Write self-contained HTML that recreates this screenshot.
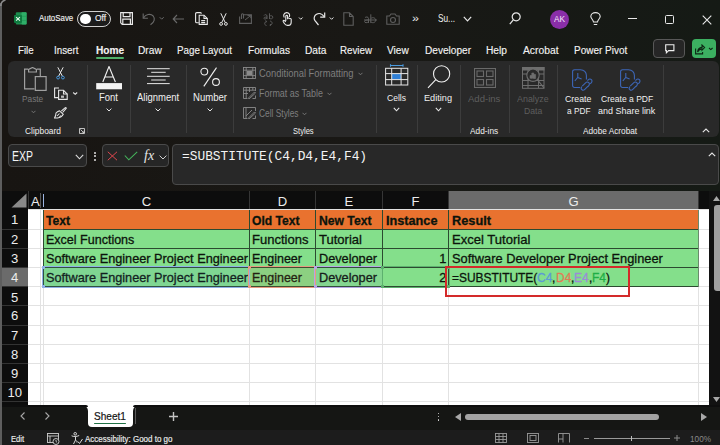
<!DOCTYPE html>
<html><head><meta charset="utf-8"><style>
html,body{margin:0;padding:0;}
body{width:720px;height:445px;overflow:hidden;position:relative;background:#1b1a17;font-family:"Liberation Sans", sans-serif;}
body>div,body>span,body>svg{position:absolute;}
.t{white-space:nowrap;display:block;}
.bg{left:0;top:0;width:720px;height:191px;background:linear-gradient(90deg,#181512 0%,#191815 50%,#151a15 100%);}
</style></head><body>
<div class="bg"></div>
<div style="left:0px;top:3px;width:1.6px;height:442px;background:#5e5e5e;"></div>
<svg style="left:0;top:0" width="8" height="6" viewBox="0 0 8 6"><path d="M0.8 6 C0.8 3 2.5 0.8 5.5 0" stroke="#8a8a8a" stroke-width="1.6" fill="none"/></svg>
<svg style="left:14px;top:12px" width="14" height="14" viewBox="0 0 14 14">
<rect x="1.8" y="0.2" width="10.8" height="12.4" rx="1" fill="#1d8c4e"/>
<rect x="7.5" y="0.2" width="5.1" height="12.4" rx="0.8" fill="#2fae68"/>
<path d="M7.5 4.3 H12.6 M7.5 8.4 H12.6" stroke="#1d8c4e" stroke-width="0.5"/>
<rect x="0" y="2.9" width="8" height="8" rx="0.8" fill="#0f7b40"/>
<path d="M2.1 5.2 L5.9 8.6 M5.9 5.2 L2.1 8.6" stroke="#e8fff0" stroke-width="1.1"/>
</svg>
<span class="t" style="left:38.50px;top:14.22px;font-size:9.01px;line-height:9.01px;font-family:'Liberation Sans', sans-serif;font-weight:400;color:#f0f0f0;transform:scaleX(0.8777);transform-origin:left top;-webkit-text-stroke:0.15px #f0f0f0;">AutoSave</span>
<div style="left:77.1px;top:11px;width:33.8px;height:15.6px;border:1.4px solid #d0d0d0;border-radius:8px;box-sizing:border-box;background:#1c1c1c;"></div>
<div style="left:80.1px;top:13.8px;width:10.6px;height:10.6px;background:#fff;border-radius:50%;"></div>
<span class="t" style="left:94.60px;top:14.22px;font-size:9.01px;line-height:9.01px;font-family:'Liberation Sans', sans-serif;font-weight:400;color:#f0f0f0;transform:scaleX(0.9364);transform-origin:left top;-webkit-text-stroke:0.15px #f0f0f0;">Off</span>
<svg style="left:120px;top:12px" width="14" height="13" viewBox="0 0 14 13" fill="none" stroke="#e8e8e8" stroke-width="1.2">
<path d="M0.7 0.7 H12.4 V12.3 H2.2 L0.7 10.8 Z"/><path d="M3.2 0.7 V4.6 H10 V0.7"/><path d="M2.8 12.3 V7.2 H10.4 V12.3"/>
</svg>
<svg style="left:142px;top:12px" width="24" height="14" viewBox="0 0 24 14" fill="none" stroke="#6a6a6a" stroke-width="1.1">
<path d="M1.2 1.5 V6.2 H5.9"/><path d="M1.5 6 C3.5 2.2 8.5 1.3 11.2 4 C13.2 6.5 12.6 10 8.5 12.8"/>
<path d="M17.7 5.2 L19.7 7.2 L21.7 5.2" stroke-width="1"/>
</svg>
<svg style="left:172px;top:13.5px" width="12" height="10" viewBox="0 0 12 10" fill="none" stroke="#6a6a6a" stroke-width="1.1">
<path d="M12 5 H1.2 M5 1 L1.2 5 L5 9"/></svg>
<svg style="left:194.5px;top:12px" width="13" height="13" viewBox="0 0 13 13" fill="none" stroke="#e8e8e8" stroke-width="1.1">
<path d="M6.5 1.6 C6.2 0.8 5.8 0.6 5 0.6 H1.8 C1 0.6 0.6 1 0.6 1.8 V9.8 C0.6 10.4 1 10.8 1.8 10.8 H3.8"/><path d="M4.2 3.2 H9 L12.3 6.5 V12.4 H4.2 Z" fill="#191815"/><path d="M9 3.2 V6.5 H12.3"/><path d="M6.2 8.6 H10.2 M6.2 10.6 H10.2"/>
</svg>
<svg style="left:218.5px;top:12.5px" width="9" height="13" viewBox="0 0 9 13" fill="none" stroke="#e8e8e8" stroke-width="1">
<path d="M1.8 0.3 L6.2 9.5 M7.2 0.3 L2.8 9.5"/><circle cx="2.1" cy="10.9" r="1.4"/><circle cx="6.9" cy="10.9" r="1.4"/></svg>
<svg style="left:239px;top:12.5px" width="13" height="11" viewBox="0 0 13 11" fill="none" stroke="#5e5e5e" stroke-width="1.1">
<path d="M4 1.8 H12.4 V10.4 H0.6 V3.5"/><path d="M2.5 6 V1.8 C2.5 0.4 4.5 0.4 4.5 1.8 V5.5"/><path d="M6 7 L11.8 2.4 M8.5 2.4 H11.8 V5.2" stroke-width="1"/></svg>
<svg style="left:263px;top:12.5px" width="11" height="13" viewBox="0 0 11 13" fill="none" stroke="#5a5a5a" stroke-width="1">
<path d="M1 2.5 C1.5 1.3 4 1.3 4 3 V6 M4 4.2 C2 4 0.8 4.5 0.8 5.2 C0.8 6.2 3 6.3 4 5"/><path d="M6.5 0.3 V6 M6.5 3.3 C7.5 2.3 9.8 2.5 9.8 4.2 C9.8 6 7.5 6.2 6.5 5.2"/>
<path d="M3.5 12.5 C1 12 1 9 3.5 8.5 M2.5 7.5 L3.8 8.5 L2.5 9.7 M7 8 C9.8 8.5 9.8 11.8 7 12.2 M8 11 L6.8 12.2 L8 13.3"/></svg>
<svg style="left:282px;top:12px" width="23" height="14" viewBox="0 0 23 14" fill="none" stroke="#e8e8e8" stroke-width="1.1">
<path d="M2.3 5.5 C1.2 3.8 1.6 0.8 4.5 0.6 C7.5 0.5 8 3.2 7.3 5"/><path d="M3.8 9 V4.2 C3.8 3 5.6 3 5.6 4.2 V7.2 M5.6 6.5 C5.8 5.7 7.4 5.8 7.4 6.7 M7.4 7 C7.6 6.2 9.2 6.3 9.2 7.3 V10.3 C9.2 12.4 8 13.4 6.5 13.4 H5.5 C4 13.4 3 12.5 2.2 11.2 L1.2 9.5 C0.8 8.7 1.8 8 2.5 8.6 L3.8 9.8"/>
<path d="M17 5.5 L18.8 7.3 L20.6 5.5" stroke-width="1"/></svg>
<svg style="left:312.5px;top:12px" width="22" height="14" viewBox="0 0 22 14" fill="none" stroke="#e8e8e8" stroke-width="1.2">
<path d="M5.5 13 L1.8 8.4 C0.5 6.5 1.2 3.5 3.5 2.2 C6 0.8 9.2 1.5 11.2 4.8"/><path d="M11.7 0.5 V5.2 H7.2"/>
<path d="M16.8 5.5 L18.6 7.3 L20.4 5.5" stroke-width="1"/></svg>
<svg style="left:343px;top:11.5px" width="11" height="14" viewBox="0 0 11 14" fill="none" stroke="#5e5e5e" stroke-width="1.1">
<path d="M0.8 0.8 H6.5 L10.2 4.5 V13.2 H0.8 Z M6.5 0.8 V4.5 H10.2"/></svg>
<svg style="left:364px;top:14px" width="13" height="10" viewBox="0 0 13 10" fill="none" stroke="#5e5e5e" stroke-width="1">
<path d="M1 3.8 C1.5 2.6 4.5 2.6 4.5 4.4 V9 M4.5 6 C2.5 5.8 0.6 6.3 0.6 7.5 C0.6 9 3.2 9.2 4.5 7.6"/><path d="M6.8 0.3 V9 M6.8 4.6 C8 3.2 11.6 3.3 11.6 6.2 C11.6 9 8 9.3 6.8 7.8"/><path d="M0 6 H13"/></svg>
<svg style="left:386px;top:12.5px" width="14" height="12" viewBox="0 0 14 12" fill="none" stroke="#5e5e5e" stroke-width="1.1">
<path d="M0.8 3 H3.5 L5 1 H9 L10.5 3 H13.2 V11.2 H0.8 Z"/><circle cx="7" cy="7" r="2.5"/></svg>
<span class="t" style="left:412.00px;top:14.34px;font-size:10.17px;line-height:10.17px;font-family:'Liberation Sans', sans-serif;font-weight:400;color:#e8e8e8;transform:scaleX(1.2370);transform-origin:left top;">»</span>
<span class="t" style="left:438.00px;top:14.34px;font-size:10.17px;line-height:10.17px;font-family:'Liberation Sans', sans-serif;font-weight:400;color:#f0f0f0;transform:scaleX(0.8124);transform-origin:left top;">Su...</span>
<svg style="left:463px;top:15.5px" width="9" height="6" viewBox="0 0 9 6" fill="none" stroke="#e8e8e8" stroke-width="1.2"><path d="M0.8 0.8 L4.5 4.8 L8.2 0.8"/></svg>
<svg style="left:509px;top:12px" width="12" height="13" viewBox="0 0 12 13" fill="none" stroke="#e8e8e8" stroke-width="1.2">
<circle cx="7.2" cy="4.8" r="4"/><path d="M4.3 7.8 L0.8 12.2"/></svg>
<div style="left:549.5px;top:9.5px;width:19px;height:19px;background:#8a2ea8;border-radius:50%;"></div>
<span class="t" style="left:553.50px;top:14.33px;font-size:9.59px;line-height:9.59px;font-family:'Liberation Sans', sans-serif;font-weight:400;color:#f4e8f8;transform:scaleX(0.8595);transform-origin:left top;">AK</span>
<svg style="left:589.5px;top:11.5px" width="11" height="14" viewBox="0 0 11 14" fill="none" stroke="#e8e8e8" stroke-width="1.1">
<path d="M3.5 10 C3.5 8 0.8 6.5 0.8 4.5 C0.8 2.2 3 0.6 5.5 0.6 C8 0.6 10.2 2.2 10.2 4.5 C10.2 6.5 7.5 8 7.5 10 Z M3.8 12.5 H7.2"/></svg>
<div style="left:627.5px;top:18.3px;width:9px;height:1.2px;background:#e8e8e8;"></div>
<div style="left:665px;top:15px;width:8.5px;height:8.5px;border:1.1px solid #e8e8e8;border-radius:1.5px;box-sizing:border-box;"></div>
<svg style="left:702px;top:14.5px" width="10" height="10" viewBox="0 0 10 10" fill="none" stroke="#e8e8e8" stroke-width="1.1"><path d="M0.7 0.7 L9.3 9.3 M9.3 0.7 L0.7 9.3"/></svg>
<span class="t" style="left:18.20px;top:44.10px;font-size:11.63px;line-height:11.63px;font-family:'Liberation Sans', sans-serif;font-weight:400;color:#f2f2f2;transform:scaleX(0.8326);transform-origin:left top;-webkit-text-stroke:0.15px #f2f2f2;">File</span>
<span class="t" style="left:54.40px;top:44.10px;font-size:11.63px;line-height:11.63px;font-family:'Liberation Sans', sans-serif;font-weight:400;color:#f2f2f2;transform:scaleX(0.8425);transform-origin:left top;-webkit-text-stroke:0.15px #f2f2f2;">Insert</span>
<span class="t" style="left:95.60px;top:44.10px;font-size:11.63px;line-height:11.63px;font-family:'Liberation Sans', sans-serif;font-weight:700;color:#f2f2f2;transform:scaleX(0.8729);transform-origin:left top;-webkit-text-stroke:0.15px #f2f2f2;">Home</span>
<span class="t" style="left:138.20px;top:44.10px;font-size:11.63px;line-height:11.63px;font-family:'Liberation Sans', sans-serif;font-weight:400;color:#f2f2f2;transform:scaleX(0.8771);transform-origin:left top;-webkit-text-stroke:0.15px #f2f2f2;">Draw</span>
<span class="t" style="left:177.00px;top:44.10px;font-size:11.63px;line-height:11.63px;font-family:'Liberation Sans', sans-serif;font-weight:400;color:#f2f2f2;transform:scaleX(0.8423);transform-origin:left top;-webkit-text-stroke:0.15px #f2f2f2;">Page Layout</span>
<span class="t" style="left:248.00px;top:44.10px;font-size:11.63px;line-height:11.63px;font-family:'Liberation Sans', sans-serif;font-weight:400;color:#f2f2f2;transform:scaleX(0.8667);transform-origin:left top;-webkit-text-stroke:0.15px #f2f2f2;">Formulas</span>
<span class="t" style="left:304.50px;top:44.10px;font-size:11.63px;line-height:11.63px;font-family:'Liberation Sans', sans-serif;font-weight:400;color:#f2f2f2;transform:scaleX(0.8753);transform-origin:left top;-webkit-text-stroke:0.15px #f2f2f2;">Data</span>
<span class="t" style="left:340.00px;top:44.10px;font-size:11.63px;line-height:11.63px;font-family:'Liberation Sans', sans-serif;font-weight:400;color:#f2f2f2;transform:scaleX(0.8393);transform-origin:left top;-webkit-text-stroke:0.15px #f2f2f2;">Review</span>
<span class="t" style="left:387.00px;top:44.10px;font-size:11.63px;line-height:11.63px;font-family:'Liberation Sans', sans-serif;font-weight:400;color:#f2f2f2;transform:scaleX(0.8702);transform-origin:left top;-webkit-text-stroke:0.15px #f2f2f2;">View</span>
<span class="t" style="left:424.50px;top:44.10px;font-size:11.63px;line-height:11.63px;font-family:'Liberation Sans', sans-serif;font-weight:400;color:#f2f2f2;transform:scaleX(0.8679);transform-origin:left top;-webkit-text-stroke:0.15px #f2f2f2;">Developer</span>
<span class="t" style="left:486.00px;top:44.10px;font-size:11.63px;line-height:11.63px;font-family:'Liberation Sans', sans-serif;font-weight:400;color:#f2f2f2;transform:scaleX(0.8781);transform-origin:left top;-webkit-text-stroke:0.15px #f2f2f2;">Help</span>
<span class="t" style="left:522.50px;top:44.10px;font-size:11.63px;line-height:11.63px;font-family:'Liberation Sans', sans-serif;font-weight:400;color:#f2f2f2;transform:scaleX(0.8859);transform-origin:left top;-webkit-text-stroke:0.15px #f2f2f2;">Acrobat</span>
<span class="t" style="left:573.75px;top:44.10px;font-size:11.63px;line-height:11.63px;font-family:'Liberation Sans', sans-serif;font-weight:400;color:#f2f2f2;transform:scaleX(0.8583);transform-origin:left top;-webkit-text-stroke:0.15px #f2f2f2;">Power Pivot</span>
<div style="left:95.6px;top:56.7px;width:28.4px;height:2px;background:#4fb06a;border-radius:1px;"></div>
<div style="left:653.1px;top:39.2px;width:32px;height:18.5px;border:1px solid #585858;border-radius:4px;box-sizing:border-box;background:#262626;"></div>
<svg style="left:664.5px;top:44px" width="10" height="10" viewBox="0 0 10 10" fill="none" stroke="#f0f0f0" stroke-width="1.1"><path d="M0.7 0.7 H8.9 V6.6 H3.6 L1.4 8.8 V6.6 H0.7 Z"/></svg>
<div style="left:691.9px;top:39.2px;width:24.1px;height:18.5px;background:#3cb061;border-radius:4px;"></div>
<svg style="left:694.5px;top:44px" width="19" height="11" viewBox="0 0 19 11" fill="none" stroke="#0d2614" stroke-width="1.1">
<path d="M0.6 4.5 V9.9 H7.6 V8"/><path d="M2.6 8 C2.8 5.5 4.5 3.6 7 3.4 V1 L9.6 3.6 L7 6.2 V4.9 C5 5 3.5 6.2 2.6 8 Z"/><path d="M14 4 L15.8 5.6 L17.6 4"/></svg>
<div style="left:8.0px;top:61.0px;width:710.5px;height:76.3px;background:#292929;border-radius:6px;"></div>
<div style="left:87.3px;top:65px;width:1px;height:68px;background:#3c3c3c;"></div>
<div style="left:130px;top:65px;width:1px;height:68px;background:#3c3c3c;"></div>
<div style="left:186px;top:65px;width:1px;height:68px;background:#3c3c3c;"></div>
<div style="left:233.3px;top:65px;width:1px;height:68px;background:#3c3c3c;"></div>
<div style="left:375.7px;top:65px;width:1px;height:68px;background:#3c3c3c;"></div>
<div style="left:417.3px;top:65px;width:1px;height:68px;background:#3c3c3c;"></div>
<div style="left:460px;top:65px;width:1px;height:68px;background:#3c3c3c;"></div>
<div style="left:508.7px;top:65px;width:1px;height:68px;background:#3c3c3c;"></div>
<div style="left:556.8px;top:65px;width:1px;height:68px;background:#3c3c3c;"></div>
<div style="left:663.3px;top:65px;width:1px;height:68px;background:#3c3c3c;"></div>
<svg style="left:24px;top:67px" width="23" height="24" viewBox="0 0 23 24" fill="none" stroke="#a0a0a0" stroke-width="1.2">
<path d="M4 2.2 H0.6 V21.8 H10.5"/><path d="M4.6 5 V2.4 L8.5 0.5 L12.4 2.4 V5 Z"/><path d="M13 2.2 H16.3 V9"/>
<rect x="11.3" y="9.6" width="10.8" height="13.8"/></svg>
<span class="t" style="left:22.40px;top:95.37px;font-size:9.30px;line-height:9.30px;font-family:'Liberation Sans', sans-serif;font-weight:400;color:#7a7a7a;transform:scaleX(0.8912);transform-origin:left top;">Paste</span>
<svg style="left:30.5px;top:109.5px" width="5" height="4" viewBox="0 0 5 4" fill="none" stroke="#7a7a7a" stroke-width="0.9"><path d="M0.5 0.8 L2.5 2.8 L4.5 0.8"/></svg>
<svg style="left:56px;top:67px" width="9" height="12.5" viewBox="0 0 9 12.5" fill="none" stroke-width="1">
<path d="M1.8 0.3 L6.3 9 M7.2 0.3 L2.7 9" stroke="#e8e8e8"/><circle cx="2.1" cy="10.6" r="1.4" stroke="#4a9be0"/><circle cx="6.9" cy="10.6" r="1.4" stroke="#4a9be0"/></svg>
<svg style="left:53.8px;top:87px" width="24" height="13" viewBox="0 0 24 13" fill="none" stroke="#e6e6e6" stroke-width="1.1">
<path d="M5 1 H0.6 V10.6 H4"/><path d="M4.6 3.3 H9.5 L13.2 7 V12.4 H4.6 Z" fill="#292929"/><path d="M9.5 3.3 V7 H13.2"/><rect x="7" y="8.6" width="3" height="2.2" fill="#bdbdbd" stroke="none"/>
<path d="M19.2 5.5 L21.2 7.3 L23.2 5.5" stroke-width="1.1"/></svg>
<svg style="left:54px;top:107px" width="13" height="11.5" viewBox="0 0 13 11.5" fill="none" stroke="#e6e6e6" stroke-width="1.05">
<path d="M7.3 4.2 L11 0.8 C11.7 0.2 12.6 1 12 1.7 L8.6 5.5"/><path d="M5.5 3.8 L9.3 7.3 C8.3 9.3 5.8 10.8 3.5 11 L0.5 11 C1.5 9.5 2 7.5 2 6 C3 5 4.5 4.2 5.5 3.8 Z"/><path d="M3 9 L5.5 6.5 M5.2 10.3 L7 8.5"/></svg>
<span class="t" style="left:25.00px;top:126.25px;font-size:9.45px;line-height:9.45px;font-family:'Liberation Sans', sans-serif;font-weight:400;color:#f0f0f0;transform:scaleX(0.8902);transform-origin:left top;">Clipboard</span>
<svg style="left:79px;top:128px" width="6" height="6" viewBox="0 0 6 6" fill="none" stroke="#cfcfcf" stroke-width="0.9"><path d="M0.5 5.5 V0.5 H5.5 V5.5 Z M1.5 1.5 L5 5 M5 2.8 V5 H2.8"/></svg>
<svg style="left:96px;top:65.5px" width="26" height="24" viewBox="0 0 26 24" fill="none" stroke="#f2f2f2" stroke-width="1.1">
<path d="M6.8 16 L13 0.5 L19.4 16 M8.8 11 H17.3"/><rect x="0.2" y="17.1" width="25.8" height="6.2" fill="#f4f4f4" stroke="none"/></svg>
<span class="t" style="left:99.30px;top:93.04px;font-size:10.17px;line-height:10.17px;font-family:'Liberation Sans', sans-serif;font-weight:400;color:#f0f0f0;transform:scaleX(0.9332);transform-origin:left top;">Font</span>
<svg style="left:105.8px;top:107.6px" width="6" height="4" viewBox="0 0 6 4" fill="none" stroke="#e6e6e6" stroke-width="1"><path d="M0.6 0.6 L3 3 L5.4 0.6"/></svg>
<svg style="left:146.5px;top:68px" width="23" height="17" viewBox="0 0 23 17" stroke="#e6e6e6" stroke-width="1">
<path d="M0 0.7 H22.7 M4.2 4.3 H18.7 M0 8.3 H22.7 M4.2 12 H18.7 M0 15.6 H22.7"/></svg>
<span class="t" style="left:136.70px;top:93.04px;font-size:10.17px;line-height:10.17px;font-family:'Liberation Sans', sans-serif;font-weight:400;color:#f0f0f0;transform:scaleX(0.9349);transform-origin:left top;">Alignment</span>
<svg style="left:155.2px;top:107.6px" width="6" height="4" viewBox="0 0 6 4" fill="none" stroke="#e6e6e6" stroke-width="1"><path d="M0.6 0.6 L3 3 L5.4 0.6"/></svg>
<svg style="left:199.5px;top:66.5px" width="21" height="20" viewBox="0 0 21 20" fill="none" stroke="#f0f0f0" stroke-width="1.1">
<circle cx="4.3" cy="4.6" r="3.4"/><circle cx="16" cy="15" r="3.4"/><path d="M16.5 0.6 L3.8 19.4"/></svg>
<span class="t" style="left:192.70px;top:93.04px;font-size:10.17px;line-height:10.17px;font-family:'Liberation Sans', sans-serif;font-weight:400;color:#f0f0f0;transform:scaleX(0.9395);transform-origin:left top;">Number</span>
<svg style="left:206.5px;top:107.6px" width="6" height="4" viewBox="0 0 6 4" fill="none" stroke="#e6e6e6" stroke-width="1"><path d="M0.6 0.6 L3 3 L5.4 0.6"/></svg>
<svg style="left:243px;top:67.3px" width="13" height="12" viewBox="0 0 13 12" fill="none" stroke="#8a8a8a" stroke-width="0.9"><rect x="0.5" y="0.5" width="12" height="11"/><path d="M0.5 3.2 H12.5 M0.5 8.6 H12.5 M3.2 0.5 V11.5 M9.8 0.5 V11.5"/><rect x="4" y="4" width="5" height="4" fill="#8a8a8a" stroke="none"/></svg>
<svg style="left:243px;top:87.3px" width="13" height="12" viewBox="0 0 13 12" fill="none" stroke="#8a8a8a" stroke-width="0.9"><path d="M12.5 4 V0.5 H0.5 V11.5 H4 M0.5 3.2 H12.5 M3.2 0.5 V11.5 M6.5 0.5 V5 M9.8 0.5 V3.2 M0.5 6.5 H5"/><path d="M5 11.5 L11.5 5 L12.5 6 L6 12 H5 Z M9.5 11.5 H12.5 V8.5"/></svg>
<svg style="left:243px;top:107.3px" width="13" height="12" viewBox="0 0 13 12" fill="none" stroke="#8a8a8a" stroke-width="0.9"><path d="M12.5 4 V0.5 H0.5 V11.5 H4 M3 0.5 V11.5"/><path d="M5 11.5 L11.5 5 L12.5 6 L6 12 H5 Z M9.5 11.5 H12.5 V8.5 M3 9 L9 3"/></svg>
<span class="t" style="left:258.70px;top:68.84px;font-size:10.17px;line-height:10.17px;font-family:'Liberation Sans', sans-serif;font-weight:400;color:#7e7e7e;transform:scaleX(0.9242);transform-origin:left top;">Conditional Formatting</span>
<span class="t" style="left:258.70px;top:88.64px;font-size:10.17px;line-height:10.17px;font-family:'Liberation Sans', sans-serif;font-weight:400;color:#7e7e7e;transform:scaleX(0.8796);transform-origin:left top;">Format as Table</span>
<span class="t" style="left:258.70px;top:108.84px;font-size:10.17px;line-height:10.17px;font-family:'Liberation Sans', sans-serif;font-weight:400;color:#7e7e7e;transform:scaleX(0.8239);transform-origin:left top;">Cell Styles</span>
<svg style="left:357.5px;top:72px" width="5" height="4" viewBox="0 0 5 4" fill="none" stroke="#7e7e7e" stroke-width="0.9"><path d="M0.5 0.8 L2.5 2.8 L4.5 0.8"/></svg>
<svg style="left:326.5px;top:92px" width="5" height="4" viewBox="0 0 5 4" fill="none" stroke="#7e7e7e" stroke-width="0.9"><path d="M0.5 0.8 L2.5 2.8 L4.5 0.8"/></svg>
<svg style="left:301.5px;top:112px" width="5" height="4" viewBox="0 0 5 4" fill="none" stroke="#7e7e7e" stroke-width="0.9"><path d="M0.5 0.8 L2.5 2.8 L4.5 0.8"/></svg>
<span class="t" style="left:293.30px;top:126.13px;font-size:9.59px;line-height:9.59px;font-family:'Liberation Sans', sans-serif;font-weight:400;color:#f0f0f0;transform:scaleX(0.7924);transform-origin:left top;">Styles</span>
<svg style="left:385px;top:64px" width="24" height="22" viewBox="0 0 24 22" fill="none" stroke="#e6e6e6" stroke-width="1">
<path d="M5.5 1.5 H18 M5.5 0.3 V2.7 M18 0.3 V2.7" stroke="#4a9be0" stroke-width="1.1"/><rect x="0.6" y="4.3" width="22.2" height="16.7"/><rect x="6.7" y="9.6" width="9.4" height="6" fill="#2f7fd6" stroke="none"/>
<path d="M0.6 9.6 H22.8 M0.6 15.6 H22.8 M6.7 4.3 V21 M16.1 4.3 V21"/></svg>
<span class="t" style="left:386.70px;top:92.88px;font-size:9.88px;line-height:9.88px;font-family:'Liberation Sans', sans-serif;font-weight:400;color:#f0f0f0;transform:scaleX(0.8649);transform-origin:left top;">Cells</span>
<svg style="left:393px;top:106.5px" width="7" height="5" viewBox="0 0 7 5" fill="none" stroke="#e6e6e6" stroke-width="1.1"><path d="M0.8 0.8 L3.5 3.8 L6.2 0.8"/></svg>
<svg style="left:426.5px;top:65px" width="24" height="24" viewBox="0 0 24 24" fill="none" stroke="#f0f0f0" stroke-width="1.1">
<circle cx="14.6" cy="8.9" r="8.1"/><path d="M8.8 14.7 L1 22.8"/></svg>
<span class="t" style="left:424.30px;top:92.88px;font-size:9.88px;line-height:9.88px;font-family:'Liberation Sans', sans-serif;font-weight:400;color:#f0f0f0;transform:scaleX(0.9265);transform-origin:left top;">Editing</span>
<svg style="left:435px;top:106.5px" width="7" height="5" viewBox="0 0 7 5" fill="none" stroke="#e6e6e6" stroke-width="1.1"><path d="M0.8 0.8 L3.5 3.8 L6.2 0.8"/></svg>
<svg style="left:473.5px;top:67.5px" width="22" height="20" viewBox="0 0 22 20" fill="none" stroke="#6a6a6a" stroke-width="1.1">
<rect x="0.5" y="0.5" width="21" height="19"/><rect x="3" y="3" width="6.5" height="5.5"/><rect x="12.5" y="3" width="6.5" height="5.5"/><rect x="3" y="11.5" width="6.5" height="5.5"/><rect x="12.5" y="11.5" width="6.5" height="5.5"/></svg>
<span class="t" style="left:468.00px;top:94.08px;font-size:9.88px;line-height:9.88px;font-family:'Liberation Sans', sans-serif;font-weight:400;color:#5e5e5e;transform:scaleX(0.9668);transform-origin:left top;">Add-ins</span>
<span class="t" style="left:469.70px;top:126.33px;font-size:9.59px;line-height:9.59px;font-family:'Liberation Sans', sans-serif;font-weight:400;color:#f0f0f0;transform:scaleX(0.8669);transform-origin:left top;">Add-ins</span>
<svg style="left:521.5px;top:67px" width="23" height="22" viewBox="0 0 23 22" fill="none" stroke="#6e6e6e" stroke-width="1">
<rect x="0.5" y="0.5" width="21.5" height="20.8"/><rect x="0.5" y="0.5" width="21.5" height="2.5" fill="#6e6e6e"/><path d="M0.5 7 H22 M0.5 13.5 H22 M0.5 18.5 H22 M6 3 V21.3 M16.5 3 V21.3"/>
<circle cx="11" cy="8.2" r="6.2" fill="#292929" stroke-width="1.1"/><path d="M15.5 12.8 L22 20.8" stroke-width="1.1"/><path d="M8 11.5 V8.5 H9.8 V11.5 M9.8 11.5 V6 H11.8 V11.5 M11.8 11.5 V7.5 H13.6 V11.5 Z" fill="#6e6e6e" stroke-width="0.6"/></svg>
<span class="t" style="left:516.70px;top:94.08px;font-size:9.88px;line-height:9.88px;font-family:'Liberation Sans', sans-serif;font-weight:400;color:#5e5e5e;transform:scaleX(0.9015);transform-origin:left top;">Analyze</span>
<span class="t" style="left:524.00px;top:106.48px;font-size:9.88px;line-height:9.88px;font-family:'Liberation Sans', sans-serif;font-weight:400;color:#5e5e5e;transform:scaleX(0.8765);transform-origin:left top;">Data</span>
<svg style="left:572.3px;top:68.5px" width="22" height="22" viewBox="0 0 22 22" fill="none" stroke="#3d66b6" stroke-width="1.1">
<path d="M8 18.5 H2.5 C1.4 18.5 0.6 17.7 0.6 16.6 V2.6 C0.6 1.5 1.4 0.7 2.5 0.7 H8.5 C12 0.7 14.4 3.3 14.4 6.5 V10.5"/><path d="M5.8 4 V8.4 L2.8 12 M5.8 8.4 L9.6 10"/>
<path d="M10.2 17.2 L13.6 13.8 C14.6 12.8 16 12.8 16.8 13.6 C17.6 14.4 17.6 15.8 16.6 16.8 L15.6 17.8 M18.2 14.8 L19.2 13.8 C20.2 12.8 20.2 11.4 19.4 10.6 C18.6 9.8 17.2 9.8 16.2 10.8 L15.4 11.6 M9.8 17.6 C9 18.6 9 19.8 9.8 20.6 C10.6 21.4 11.8 21.4 12.8 20.4 L16 17.2"/></svg>
<svg style="left:620.3px;top:68.5px" width="22" height="22" viewBox="0 0 22 22" fill="none" stroke="#3d66b6" stroke-width="1.1">
<path d="M8 18.5 H2.5 C1.4 18.5 0.6 17.7 0.6 16.6 V2.6 C0.6 1.5 1.4 0.7 2.5 0.7 H8.5 C12 0.7 14.4 3.3 14.4 6.5 V10.5"/><path d="M5.8 4 V8.4 L2.8 12 M5.8 8.4 L9.6 10"/>
<path d="M10.2 17.2 L13.6 13.8 C14.6 12.8 16 12.8 16.8 13.6 C17.6 14.4 17.6 15.8 16.6 16.8 L15.6 17.8 M18.2 14.8 L19.2 13.8 C20.2 12.8 20.2 11.4 19.4 10.6 C18.6 9.8 17.2 9.8 16.2 10.8 L15.4 11.6 M9.8 17.6 C9 18.6 9 19.8 9.8 20.6 C10.6 21.4 11.8 21.4 12.8 20.4 L16 17.2"/></svg>
<span class="t" style="left:565.40px;top:94.08px;font-size:9.88px;line-height:9.88px;font-family:'Liberation Sans', sans-serif;font-weight:400;color:#f0f0f0;transform:scaleX(0.8899);transform-origin:left top;">Create</span>
<span class="t" style="left:567.20px;top:106.48px;font-size:9.88px;line-height:9.88px;font-family:'Liberation Sans', sans-serif;font-weight:400;color:#f0f0f0;transform:scaleX(0.8390);transform-origin:left top;">a PDF</span>
<span class="t" style="left:600.80px;top:94.08px;font-size:9.88px;line-height:9.88px;font-family:'Liberation Sans', sans-serif;font-weight:400;color:#f0f0f0;transform:scaleX(0.8656);transform-origin:left top;">Create a PDF</span>
<span class="t" style="left:598.30px;top:106.48px;font-size:9.88px;line-height:9.88px;font-family:'Liberation Sans', sans-serif;font-weight:400;color:#f0f0f0;transform:scaleX(0.9084);transform-origin:left top;">and Share link</span>
<span class="t" style="left:582.70px;top:126.33px;font-size:9.59px;line-height:9.59px;font-family:'Liberation Sans', sans-serif;font-weight:400;color:#f0f0f0;transform:scaleX(0.8612);transform-origin:left top;">Adobe Acrobat</span>
<svg style="left:701.5px;top:128px" width="8" height="5" viewBox="0 0 8 5" fill="none" stroke="#e6e6e6" stroke-width="1.1"><path d="M0.8 4.2 L4 1 L7.2 4.2"/></svg>
<div style="left:8px;top:144px;width:79px;height:22.5px;background:#262626;border:1px solid #4a4a4a;border-radius:4px;box-sizing:border-box;"></div>
<span class="t" style="left:12.00px;top:149.14px;font-size:14.53px;line-height:14.53px;font-family:'Liberation Sans', sans-serif;font-weight:400;color:#f4f4f4;transform:scaleX(0.7220);transform-origin:left top;">EXP</span>
<svg style="left:74.5px;top:153.5px" width="9" height="6" viewBox="0 0 9 6" fill="none" stroke="#dcdcdc" stroke-width="1.1"><path d="M0.8 0.8 L4.5 4.8 L8.2 0.8"/></svg>
<div style="left:93.5px;top:151.5px;width:2px;height:2px;background:#e0e0e0;border-radius:50%;"></div>
<div style="left:93.5px;top:155px;width:2px;height:2px;background:#e0e0e0;border-radius:50%;"></div>
<div style="left:93.5px;top:158.5px;width:2px;height:2px;background:#e0e0e0;border-radius:50%;"></div>
<div style="left:102.2px;top:144.4px;width:66.7px;height:22.3px;background:#262626;border:1px solid #4a4a4a;border-radius:4px;box-sizing:border-box;"></div>
<svg style="left:107px;top:151px" width="11" height="10" viewBox="0 0 11 10" fill="none" stroke="#e0474f" stroke-width="1.0"><path d="M0.8 0.8 L10 9.2 M10 0.8 L0.8 9.2"/></svg>
<svg style="left:124px;top:151px" width="14" height="10" viewBox="0 0 14 10" fill="none" stroke="#45b45c" stroke-width="1.1"><path d="M0.8 4.5 L4.8 8.8 L13.2 0.8"/></svg>
<span class="t" style="left:144px;top:149.2px;font-family:'Liberation Serif',serif;font-style:italic;font-size:14px;line-height:14px;color:#e6e6e6;">fx</span>
<svg style="left:159px;top:155px" width="8" height="5" viewBox="0 0 8 5" fill="none" stroke="#cfcfcf" stroke-width="1"><path d="M0.6 0.6 L4 4 L7.4 0.6"/></svg>
<div style="left:172.2px;top:144.4px;width:546.6px;height:41.0px;background:#282828;border:1px solid #4a4a4a;border-radius:4px;box-sizing:border-box;"></div>
<span class="t" style="left:181.60px;top:151.08px;font-size:12.75px;line-height:12.75px;font-family:'Liberation Mono', monospace;font-weight:400;color:#f4f4f4;transform:scaleX(1.0078);transform-origin:left top;">=SUBSTITUTE(C4,D4,E4,F4)</span>
<svg style="left:707.5px;top:151.5px" width="8" height="5" viewBox="0 0 8 5" fill="none" stroke="#e6e6e6" stroke-width="1.1"><path d="M0.8 4.2 L4 1 L7.2 4.2"/></svg>
<div style="left:28px;top:209px;width:681px;height:196px;background:#ffffff;"></div>
<div style="left:1.5px;top:191.0px;width:707.5px;height:18.599999999999994px;background:#0d0d0d;"></div>
<div style="left:1.5px;top:209px;width:26.5px;height:196px;background:#0d0d0d;"></div>
<svg style="left:11px;top:193px" width="16" height="15" viewBox="0 0 16 15"><path d="M15.5 0.5 V14.5 H0.5 Z" fill="#8a8a8a"/></svg>
<div style="left:449.0px;top:191.0px;width:249.39999999999998px;height:18.599999999999994px;background:#6b6b6b;"></div>
<div style="left:1.5px;top:267.7px;width:26.5px;height:19.100000000000023px;background:#6b6b6b;"></div>
<div style="left:27.5px;top:191.0px;width:1px;height:18.599999999999994px;background:#363636;"></div>
<div style="left:248.9px;top:191.0px;width:1px;height:18.599999999999994px;background:#363636;"></div>
<div style="left:314.9px;top:191.0px;width:1px;height:18.599999999999994px;background:#363636;"></div>
<div style="left:382.0px;top:191.0px;width:1px;height:18.599999999999994px;background:#363636;"></div>
<div style="left:448.0px;top:191.0px;width:1px;height:18.599999999999994px;background:#363636;"></div>
<div style="left:698.4px;top:191.0px;width:1px;height:18.599999999999994px;background:#363636;"></div>
<div style="left:40.1px;top:193.0px;width:1px;height:15px;background:#555;"></div>
<div style="left:42.9px;top:194.0px;width:1px;height:13px;background:#9cb4e0;"></div>
<div style="left:1.5px;top:228.6px;width:26.5px;height:1px;background:#333;"></div>
<div style="left:1.5px;top:247.8px;width:26.5px;height:1px;background:#333;"></div>
<div style="left:1.5px;top:266.7px;width:26.5px;height:1px;background:#333;"></div>
<div style="left:1.5px;top:286.3px;width:26.5px;height:1px;background:#333;"></div>
<div style="left:1.5px;top:304.9px;width:26.5px;height:1px;background:#333;"></div>
<div style="left:1.5px;top:324.6px;width:26.5px;height:1px;background:#333;"></div>
<div style="left:1.5px;top:343.9px;width:26.5px;height:1px;background:#333;"></div>
<div style="left:1.5px;top:362.9px;width:26.5px;height:1px;background:#333;"></div>
<div style="left:1.5px;top:381.8px;width:26.5px;height:1px;background:#333;"></div>
<div style="left:1.5px;top:400.9px;width:26.5px;height:1px;background:#333;"></div>
<div style="left:28px;top:209.1px;width:681px;height:1px;background:#e2e2e2;"></div>
<div style="left:28px;top:228.6px;width:681px;height:1px;background:#e2e2e2;"></div>
<div style="left:28px;top:247.8px;width:681px;height:1px;background:#e2e2e2;"></div>
<div style="left:28px;top:266.7px;width:681px;height:1px;background:#e2e2e2;"></div>
<div style="left:28px;top:286.3px;width:681px;height:1px;background:#e2e2e2;"></div>
<div style="left:28px;top:304.9px;width:681px;height:1px;background:#e2e2e2;"></div>
<div style="left:28px;top:324.6px;width:681px;height:1px;background:#e2e2e2;"></div>
<div style="left:28px;top:343.9px;width:681px;height:1px;background:#e2e2e2;"></div>
<div style="left:28px;top:362.9px;width:681px;height:1px;background:#e2e2e2;"></div>
<div style="left:28px;top:381.8px;width:681px;height:1px;background:#e2e2e2;"></div>
<div style="left:28px;top:400.9px;width:681px;height:1px;background:#e2e2e2;"></div>
<div style="left:40.1px;top:209.6px;width:1px;height:196px;background:#e2e2e2;"></div>
<div style="left:42.9px;top:209.6px;width:1px;height:196px;background:#e2e2e2;"></div>
<div style="left:248.9px;top:209.6px;width:1px;height:196px;background:#e2e2e2;"></div>
<div style="left:314.9px;top:209.6px;width:1px;height:196px;background:#e2e2e2;"></div>
<div style="left:382.0px;top:209.6px;width:1px;height:196px;background:#e2e2e2;"></div>
<div style="left:448.0px;top:209.6px;width:1px;height:196px;background:#e2e2e2;"></div>
<div style="left:698.4px;top:209.6px;width:1px;height:196px;background:#e2e2e2;"></div>
<span class="t" style="left:31.00px;top:194.97px;font-size:13.08px;line-height:13.08px;font-family:'Liberation Sans', sans-serif;font-weight:400;color:#ececec;transform:scaleX(1.0000);transform-origin:left top;">A</span>
<span class="t" style="left:141.68px;top:194.97px;font-size:13.08px;line-height:13.08px;font-family:'Liberation Sans', sans-serif;font-weight:400;color:#ececec;transform:scaleX(1.0000);transform-origin:left top;">C</span>
<span class="t" style="left:277.68px;top:194.97px;font-size:13.08px;line-height:13.08px;font-family:'Liberation Sans', sans-serif;font-weight:400;color:#ececec;transform:scaleX(1.0000);transform-origin:left top;">D</span>
<span class="t" style="left:344.59px;top:194.97px;font-size:13.08px;line-height:13.08px;font-family:'Liberation Sans', sans-serif;font-weight:400;color:#ececec;transform:scaleX(1.0000);transform-origin:left top;">E</span>
<span class="t" style="left:411.50px;top:194.97px;font-size:13.08px;line-height:13.08px;font-family:'Liberation Sans', sans-serif;font-weight:400;color:#ececec;transform:scaleX(1.0000);transform-origin:left top;">F</span>
<span class="t" style="left:568.61px;top:194.97px;font-size:13.08px;line-height:13.08px;font-family:'Liberation Sans', sans-serif;font-weight:400;color:#ececec;transform:scaleX(1.0000);transform-origin:left top;">G</span>
<span class="t" style="left:11.12px;top:213.37px;font-size:13.08px;line-height:13.08px;font-family:'Liberation Sans', sans-serif;font-weight:400;color:#ececec;transform:scaleX(1.0000);transform-origin:left top;">1</span>
<span class="t" style="left:11.12px;top:232.87px;font-size:13.08px;line-height:13.08px;font-family:'Liberation Sans', sans-serif;font-weight:400;color:#ececec;transform:scaleX(1.0000);transform-origin:left top;">2</span>
<span class="t" style="left:11.12px;top:252.07px;font-size:13.08px;line-height:13.08px;font-family:'Liberation Sans', sans-serif;font-weight:400;color:#ececec;transform:scaleX(1.0000);transform-origin:left top;">3</span>
<span class="t" style="left:11.12px;top:270.97px;font-size:13.08px;line-height:13.08px;font-family:'Liberation Sans', sans-serif;font-weight:400;color:#ececec;transform:scaleX(1.0000);transform-origin:left top;">4</span>
<span class="t" style="left:11.12px;top:290.57px;font-size:13.08px;line-height:13.08px;font-family:'Liberation Sans', sans-serif;font-weight:400;color:#ececec;transform:scaleX(1.0000);transform-origin:left top;">5</span>
<span class="t" style="left:11.12px;top:309.17px;font-size:13.08px;line-height:13.08px;font-family:'Liberation Sans', sans-serif;font-weight:400;color:#ececec;transform:scaleX(1.0000);transform-origin:left top;">6</span>
<span class="t" style="left:11.12px;top:328.87px;font-size:13.08px;line-height:13.08px;font-family:'Liberation Sans', sans-serif;font-weight:400;color:#ececec;transform:scaleX(1.0000);transform-origin:left top;">7</span>
<span class="t" style="left:11.12px;top:348.17px;font-size:13.08px;line-height:13.08px;font-family:'Liberation Sans', sans-serif;font-weight:400;color:#ececec;transform:scaleX(1.0000);transform-origin:left top;">8</span>
<span class="t" style="left:11.12px;top:367.17px;font-size:13.08px;line-height:13.08px;font-family:'Liberation Sans', sans-serif;font-weight:400;color:#ececec;transform:scaleX(1.0000);transform-origin:left top;">9</span>
<span class="t" style="left:7.44px;top:386.07px;font-size:13.08px;line-height:13.08px;font-family:'Liberation Sans', sans-serif;font-weight:400;color:#ececec;transform:scaleX(1.0000);transform-origin:left top;">10</span>
<div style="left:43.4px;top:209.6px;width:655.5px;height:19.5px;background:#e9722f;"></div>
<div style="left:43.4px;top:229.1px;width:655.5px;height:57.70000000000002px;background:#84df8b;"></div>
<div style="left:42.9px;top:228.6px;width:656.5px;height:1px;background:#2c4a30;"></div>
<div style="left:42.9px;top:247.8px;width:656.5px;height:1px;background:#2c4a30;"></div>
<div style="left:42.9px;top:266.7px;width:656.5px;height:1px;background:#2c4a30;"></div>
<div style="left:42.9px;top:286.3px;width:656.5px;height:1px;background:#2c4a30;"></div>
<div style="left:42.9px;top:209.6px;width:1px;height:77.20000000000002px;background:#2c4a30;"></div>
<div style="left:248.9px;top:209.6px;width:1px;height:77.20000000000002px;background:#2c4a30;"></div>
<div style="left:314.9px;top:209.6px;width:1px;height:77.20000000000002px;background:#2c4a30;"></div>
<div style="left:382.0px;top:209.6px;width:1px;height:77.20000000000002px;background:#2c4a30;"></div>
<div style="left:448.0px;top:209.6px;width:1px;height:77.20000000000002px;background:#2c4a30;"></div>
<div style="left:698.4px;top:209.6px;width:1px;height:77.20000000000002px;background:#6a8a6c;"></div>
<span class="t" style="left:46.00px;top:214.62px;font-size:12.79px;line-height:12.79px;font-family:'Liberation Sans', sans-serif;font-weight:700;color:#0c140c;transform:scaleX(0.9467);transform-origin:left top;-webkit-text-stroke:0.3px #0c140c;">Text</span>
<span class="t" style="left:252.40px;top:214.62px;font-size:12.79px;line-height:12.79px;font-family:'Liberation Sans', sans-serif;font-weight:700;color:#0c140c;transform:scaleX(0.9458);transform-origin:left top;-webkit-text-stroke:0.3px #0c140c;">Old Text</span>
<span class="t" style="left:318.50px;top:214.62px;font-size:12.79px;line-height:12.79px;font-family:'Liberation Sans', sans-serif;font-weight:700;color:#0c140c;transform:scaleX(0.9510);transform-origin:left top;-webkit-text-stroke:0.3px #0c140c;">New Text</span>
<span class="t" style="left:385.50px;top:214.62px;font-size:12.79px;line-height:12.79px;font-family:'Liberation Sans', sans-serif;font-weight:700;color:#0c140c;transform:scaleX(0.9924);transform-origin:left top;-webkit-text-stroke:0.3px #0c140c;">Instance</span>
<span class="t" style="left:451.50px;top:214.62px;font-size:12.79px;line-height:12.79px;font-family:'Liberation Sans', sans-serif;font-weight:700;color:#0c140c;transform:scaleX(0.9977);transform-origin:left top;-webkit-text-stroke:0.3px #0c140c;">Result</span>
<span class="t" style="left:46.30px;top:233.82px;font-size:12.79px;line-height:12.79px;font-family:'Liberation Sans', sans-serif;font-weight:400;color:#0c140c;transform:scaleX(0.9791);transform-origin:left top;-webkit-text-stroke:0.3px #0c140c;">Excel Functions</span>
<span class="t" style="left:252.40px;top:233.82px;font-size:12.79px;line-height:12.79px;font-family:'Liberation Sans', sans-serif;font-weight:400;color:#0c140c;transform:scaleX(1.0189);transform-origin:left top;-webkit-text-stroke:0.3px #0c140c;">Functions</span>
<span class="t" style="left:318.50px;top:233.82px;font-size:12.79px;line-height:12.79px;font-family:'Liberation Sans', sans-serif;font-weight:400;color:#0c140c;transform:scaleX(1.0195);transform-origin:left top;-webkit-text-stroke:0.3px #0c140c;">Tutorial</span>
<span class="t" style="left:451.50px;top:233.82px;font-size:12.79px;line-height:12.79px;font-family:'Liberation Sans', sans-serif;font-weight:400;color:#0c140c;transform:scaleX(1.0224);transform-origin:left top;-webkit-text-stroke:0.3px #0c140c;">Excel Tutorial</span>
<span class="t" style="left:45.80px;top:252.92px;font-size:12.79px;line-height:12.79px;font-family:'Liberation Sans', sans-serif;font-weight:400;color:#0c140c;transform:scaleX(0.9943);transform-origin:left top;-webkit-text-stroke:0.3px #0c140c;">Software Engineer Project Engineer</span>
<span class="t" style="left:252.40px;top:252.92px;font-size:12.79px;line-height:12.79px;font-family:'Liberation Sans', sans-serif;font-weight:400;color:#0c140c;transform:scaleX(0.9765);transform-origin:left top;-webkit-text-stroke:0.3px #0c140c;">Engineer</span>
<span class="t" style="left:318.50px;top:252.92px;font-size:12.79px;line-height:12.79px;font-family:'Liberation Sans', sans-serif;font-weight:400;color:#0c140c;transform:scaleX(0.9948);transform-origin:left top;-webkit-text-stroke:0.3px #0c140c;">Developer</span>
<span class="t" style="left:451.50px;top:252.92px;font-size:12.79px;line-height:12.79px;font-family:'Liberation Sans', sans-serif;font-weight:400;color:#0c140c;transform:scaleX(1.0026);transform-origin:left top;-webkit-text-stroke:0.3px #0c140c;">Software Developer Project Engineer</span>
<span class="t" style="left:45.80px;top:271.82px;font-size:12.79px;line-height:12.79px;font-family:'Liberation Sans', sans-serif;font-weight:400;color:#0c140c;transform:scaleX(0.9943);transform-origin:left top;-webkit-text-stroke:0.3px #0c140c;">Software Engineer Project Engineer</span>
<span class="t" style="left:252.40px;top:271.82px;font-size:12.79px;line-height:12.79px;font-family:'Liberation Sans', sans-serif;font-weight:400;color:#0c140c;transform:scaleX(0.9765);transform-origin:left top;-webkit-text-stroke:0.3px #0c140c;">Engineer</span>
<span class="t" style="left:318.50px;top:271.82px;font-size:12.79px;line-height:12.79px;font-family:'Liberation Sans', sans-serif;font-weight:400;color:#0c140c;transform:scaleX(0.9948);transform-origin:left top;-webkit-text-stroke:0.3px #0c140c;">Developer</span>
<span class="t" style="left:439.19px;top:252.92px;font-size:12.79px;line-height:12.79px;font-family:'Liberation Sans', sans-serif;font-weight:400;color:#0c140c;transform:scaleX(1.0000);transform-origin:left top;-webkit-text-stroke:0.3px #0c140c;">1</span>
<span class="t" style="left:439.19px;top:271.82px;font-size:12.79px;line-height:12.79px;font-family:'Liberation Sans', sans-serif;font-weight:400;color:#0c140c;transform:scaleX(1.0000);transform-origin:left top;-webkit-text-stroke:0.3px #0c140c;">2</span>
<span class="t" style="left:451.70px;top:271.82px;font-size:12.79px;line-height:12.79px;font-family:'Liberation Sans', sans-serif;font-weight:400;color:#0c140c;transform:scaleX(0.9350);transform-origin:left top;-webkit-text-stroke:0.3px #0c140c;">=SUBSTITUTE(</span>
<span class="t" style="left:537.09px;top:271.82px;font-size:12.79px;line-height:12.79px;font-family:'Liberation Sans', sans-serif;font-weight:400;color:#5c9bd6;transform:scaleX(0.9350);transform-origin:left top;-webkit-text-stroke:0.3px #5c9bd6;">C4</span>
<span class="t" style="left:552.38px;top:271.82px;font-size:12.79px;line-height:12.79px;font-family:'Liberation Sans', sans-serif;font-weight:400;color:#0c140c;transform:scaleX(0.9350);transform-origin:left top;-webkit-text-stroke:0.3px #0c140c;">,</span>
<span class="t" style="left:555.70px;top:271.82px;font-size:12.79px;line-height:12.79px;font-family:'Liberation Sans', sans-serif;font-weight:400;color:#e07b55;transform:scaleX(0.9350);transform-origin:left top;-webkit-text-stroke:0.3px #e07b55;">D4</span>
<span class="t" style="left:570.99px;top:271.82px;font-size:12.79px;line-height:12.79px;font-family:'Liberation Sans', sans-serif;font-weight:400;color:#0c140c;transform:scaleX(0.9350);transform-origin:left top;-webkit-text-stroke:0.3px #0c140c;">,</span>
<span class="t" style="left:574.31px;top:271.82px;font-size:12.79px;line-height:12.79px;font-family:'Liberation Sans', sans-serif;font-weight:400;color:#9b8bd8;transform:scaleX(0.9350);transform-origin:left top;-webkit-text-stroke:0.3px #9b8bd8;">E4</span>
<span class="t" style="left:588.94px;top:271.82px;font-size:12.79px;line-height:12.79px;font-family:'Liberation Sans', sans-serif;font-weight:400;color:#0c140c;transform:scaleX(0.9350);transform-origin:left top;-webkit-text-stroke:0.3px #0c140c;">,</span>
<span class="t" style="left:592.26px;top:271.82px;font-size:12.79px;line-height:12.79px;font-family:'Liberation Sans', sans-serif;font-weight:400;color:#1fae45;transform:scaleX(0.9350);transform-origin:left top;-webkit-text-stroke:0.3px #1fae45;">F4</span>
<span class="t" style="left:606.22px;top:271.82px;font-size:12.79px;line-height:12.79px;font-family:'Liberation Sans', sans-serif;font-weight:400;color:#0c140c;transform:scaleX(0.9350);transform-origin:left top;-webkit-text-stroke:0.3px #0c140c;">)</span>
<div style="left:43.4px;top:267.2px;width:206.0px;height:19.600000000000023px;background:rgba(90,140,220,0.10);"></div>
<div style="left:249.4px;top:267.2px;width:65.99999999999997px;height:19.600000000000023px;background:rgba(200,110,60,0.13);"></div>
<div style="left:315.4px;top:267.2px;width:67.10000000000002px;height:19.600000000000023px;background:rgba(140,110,210,0.08);"></div>
<div style="left:42.4px;top:266.2px;width:208.0px;height:21.600000000000023px;border:1.5px solid #8fb0e6;box-sizing:border-box;"></div>
<div style="left:41.9px;top:265.7px;width:3px;height:3px;background:#8fb0e6;"></div>
<div style="left:247.9px;top:265.7px;width:3px;height:3px;background:#8fb0e6;"></div>
<div style="left:41.9px;top:285.3px;width:3px;height:3px;background:#8fb0e6;"></div>
<div style="left:247.9px;top:285.3px;width:3px;height:3px;background:#8fb0e6;"></div>
<div style="left:248.4px;top:266.2px;width:67.99999999999997px;height:21.600000000000023px;border:1.5px solid #e89a80;box-sizing:border-box;"></div>
<div style="left:247.9px;top:265.7px;width:3px;height:3px;background:#e89a80;"></div>
<div style="left:313.9px;top:265.7px;width:3px;height:3px;background:#e89a80;"></div>
<div style="left:247.9px;top:285.3px;width:3px;height:3px;background:#e89a80;"></div>
<div style="left:313.9px;top:285.3px;width:3px;height:3px;background:#e89a80;"></div>
<div style="left:314.4px;top:266.2px;width:69.10000000000002px;height:21.600000000000023px;border:1.5px solid #b6a6e6;box-sizing:border-box;"></div>
<div style="left:313.9px;top:265.7px;width:3px;height:3px;background:#b6a6e6;"></div>
<div style="left:381.0px;top:265.7px;width:3px;height:3px;background:#b6a6e6;"></div>
<div style="left:313.9px;top:285.3px;width:3px;height:3px;background:#b6a6e6;"></div>
<div style="left:381.0px;top:285.3px;width:3px;height:3px;background:#b6a6e6;"></div>
<div style="left:381.5px;top:266.2px;width:68.0px;height:21.600000000000023px;border:1.5px solid #5db06e;box-sizing:border-box;"></div>
<div style="left:381.0px;top:265.7px;width:3px;height:3px;background:#5db06e;"></div>
<div style="left:447.0px;top:265.7px;width:3px;height:3px;background:#5db06e;"></div>
<div style="left:381.0px;top:285.3px;width:3px;height:3px;background:#5db06e;"></div>
<div style="left:447.0px;top:285.3px;width:3px;height:3px;background:#5db06e;"></div>
<div style="left:445px;top:266px;width:185px;height:30.5px;border:2.3px solid #d42a2a;box-sizing:border-box;"></div>
<div style="left:709px;top:191.0px;width:11px;height:214.0px;background:#121212;"></div>
<svg style="left:713px;top:196px" width="7" height="5" viewBox="0 0 7 5"><path d="M0 5 L3.5 0 L7 5 Z" fill="#a8a8a8"/></svg>
<div style="left:714.3px;top:205px;width:6px;height:86px;background:#a0a0a0;border-radius:3px 0 0 3px;"></div>
<svg style="left:713px;top:397px" width="7" height="5" viewBox="0 0 7 5"><path d="M0 0 L3.5 5 L7 0 Z" fill="#a8a8a8"/></svg>
<div style="left:1.5px;top:405px;width:718.5px;height:25px;background:#ffffff;"></div>
<div style="left:1.5px;top:405px;width:86px;height:25px;background:#151614;border-top-right-radius:6px;"></div>
<div style="left:132.5px;top:405px;width:587.5px;height:25px;background:#151614;border-top-left-radius:6px;"></div>
<div style="left:87.5px;top:418px;width:45px;height:12px;background:#151614;"></div>
<div style="left:132.5px;top:405px;width:587.5px;height:2px;background:#0e0e0e;border-top-left-radius:6px;"></div>
<div style="left:1.5px;top:405px;width:86px;height:2px;background:#0e0e0e;border-top-right-radius:6px;"></div>
<svg style="left:19.5px;top:412.3px" width="5" height="8" viewBox="0 0 5 8" fill="none" stroke="#a8a8a8" stroke-width="1.1"><path d="M4.5 0.5 L1 4 L4.5 7.5"/></svg>
<svg style="left:45px;top:412.3px" width="5" height="8" viewBox="0 0 5 8" fill="none" stroke="#a8a8a8" stroke-width="1.1"><path d="M0.5 0.5 L4 4 L0.5 7.5"/></svg>
<div style="left:87.5px;top:405px;width:45px;height:21.5px;background:#ffffff;border-radius:0 0 4px 4px;"></div>
<span class="t" style="left:94.00px;top:410.65px;font-size:11.34px;line-height:11.34px;font-family:'Liberation Sans', sans-serif;font-weight:400;color:#141414;transform:scaleX(0.8905);transform-origin:left top;-webkit-text-stroke:0.2px #141414;">Sheet1</span>
<div style="left:94px;top:422.5px;width:32px;height:1.6px;background:#217346;border-radius:1px;"></div>
<div style="left:135px;top:408px;width:1px;height:16px;background:#5a5a5a;"></div>
<svg style="left:168.5px;top:412px" width="9" height="9" viewBox="0 0 9 9" stroke="#c4c4c4" stroke-width="1.4"><path d="M4.5 0 V9 M0 4.5 H9"/></svg>
<div style="left:437.8px;top:412.5px;width:1.6px;height:1.6px;background:#e0e0e0;border-radius:50%;"></div>
<div style="left:437.8px;top:415.8px;width:1.6px;height:1.6px;background:#e0e0e0;border-radius:50%;"></div>
<div style="left:437.8px;top:419.1px;width:1.6px;height:1.6px;background:#e0e0e0;border-radius:50%;"></div>
<svg style="left:455px;top:413px" width="6" height="8" viewBox="0 0 6 8"><path d="M6 0 L0 4 L6 8 Z" fill="#a8a8a8"/></svg>
<div style="left:465px;top:414px;width:193.5px;height:6px;background:#a3a3a3;border-radius:3px;"></div>
<svg style="left:701px;top:413px" width="6" height="8" viewBox="0 0 6 8"><path d="M0 0 L6 4 L0 8 Z" fill="#a8a8a8"/></svg>
<div style="left:1.5px;top:429.5px;width:718.5px;height:15.5px;background:#1c1c1c;"></div>
<span class="t" style="left:10.70px;top:434.87px;font-size:8.72px;line-height:8.72px;font-family:'Liberation Sans', sans-serif;font-weight:400;color:#eeeeee;transform:scaleX(0.8784);transform-origin:left top;-webkit-text-stroke:0.15px #eeeeee;">Edit</span>
<svg style="left:46.5px;top:432.5px" width="13" height="12" viewBox="0 0 13 12" fill="none" stroke="#cfcfcf" stroke-width="0.9"><rect x="0.5" y="0.5" width="11" height="9"/><path d="M0.5 3 H11.5 M3 3 V9.5"/><circle cx="9" cy="8.5" r="3" fill="#1e1e1e"/><path d="M9 7 V8.5 L10 9.3"/></svg>
<svg style="left:71px;top:432px" width="12" height="13" viewBox="0 0 12 13" fill="none" stroke="#d8d8d8" stroke-width="1"><circle cx="4.2" cy="1.8" r="1.3"/><path d="M0.6 3.8 C2.5 4.8 5.5 4.8 8.2 3.5 M4.5 5 V8 L2.5 12 M4.5 8 C5.5 8.5 6 9.5 6 10.5"/><path d="M6.8 9.5 L8.5 11.5 L11.5 7"/></svg>
<span class="t" style="left:85.00px;top:434.87px;font-size:8.72px;line-height:8.72px;font-family:'Liberation Sans', sans-serif;font-weight:400;color:#eeeeee;transform:scaleX(0.9163);transform-origin:left top;-webkit-text-stroke:0.15px #eeeeee;">Accessibility: Good to go</span>
<svg style="left:495px;top:433px" width="12" height="10" viewBox="0 0 12 10" fill="none" stroke="#9a9a9a" stroke-width="0.9"><rect x="0.5" y="0.5" width="11" height="9"/><path d="M0.5 3.5 H11.5 M0.5 6.5 H11.5 M4 0.5 V9.5 M8 0.5 V9.5"/></svg>
<svg style="left:526.5px;top:433px" width="12" height="10" viewBox="0 0 12 10" fill="none" stroke="#9a9a9a" stroke-width="0.9"><rect x="0.5" y="0.5" width="11" height="9"/><rect x="3" y="2.5" width="6" height="5"/></svg>
<svg style="left:557.5px;top:432.5px" width="12" height="10" viewBox="0 0 12 10" fill="none" stroke="#9a9a9a" stroke-width="0.9"><path d="M0.5 9.5 V0.5 H11.5 V9.5 M0.5 6 H5 V0.5 M5 6 V9.5"/></svg>
<div style="left:583.5px;top:438px;width:5px;height:1px;background:#8a8a8a;"></div>
<div style="left:593.5px;top:438px;width:76.5px;height:1px;background:#9a9a9a;"></div>
<div style="left:631px;top:435.5px;width:1.2px;height:5px;background:#bdbdbd;"></div>
<svg style="left:674px;top:435px" width="6" height="6" viewBox="0 0 6 6" stroke="#8a8a8a" stroke-width="1"><path d="M3 0 V6 M0 3 H6"/></svg>
<span class="t" style="left:690.00px;top:434.99px;font-size:8.58px;line-height:8.58px;font-family:'Liberation Sans', sans-serif;font-weight:400;color:#8a8a8a;transform:scaleX(0.9574);transform-origin:left top;">100%</span>
</body></html>
